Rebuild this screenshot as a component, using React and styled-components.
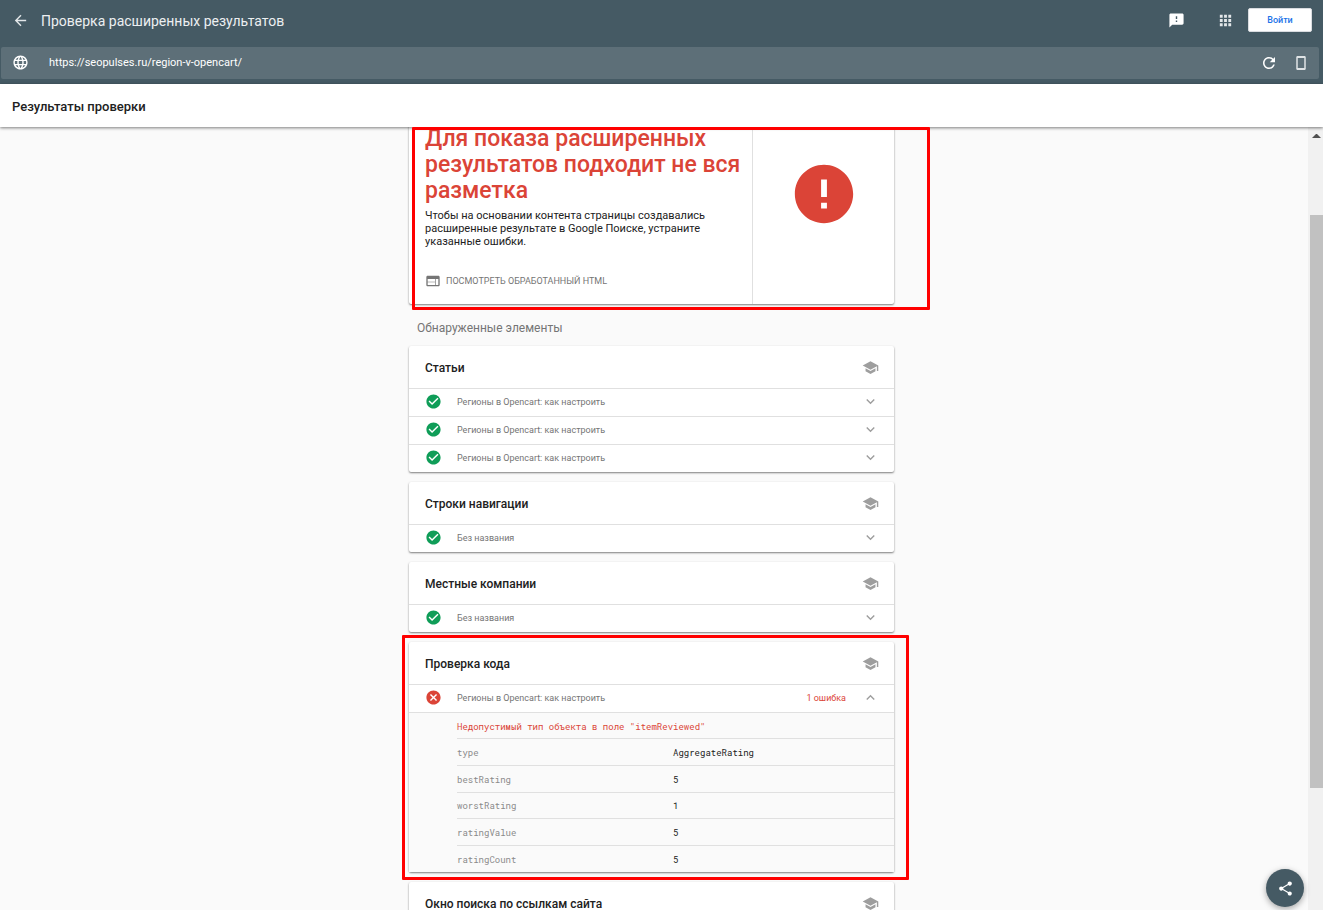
import { useState } from "react";
import styled, { createGlobalStyle } from "styled-components";
import {
  MdApps,
  MdArrowBack,
  MdCancel,
  MdCheckCircle,
  MdError,
  MdExpandLess,
  MdExpandMore,
  MdFeedback,
  MdLanguage,
  MdRefresh,
  MdSchool,
  MdShare,
  MdWeb,
} from "react-icons/md";

const GlobalStyle = createGlobalStyle`
  * {
    box-sizing: border-box;
  }
  body {
    margin: 0;
    font-family: Roboto, "Liberation Sans", sans-serif;
    color: #212121;
    background: #fafafa;
  }
  h1, h2, h3, p {
    margin: 0;
  }
  button, input {
    font-family: inherit;
  }
  svg {
    display: block;
    flex: none;
  }
`;

const Page = styled.div`
  position: relative;
  display: flex;
  flex-direction: column;
  height: 100vh;
  overflow: hidden;
`;

const Header = styled.header`
  flex: none;
  padding: 0 4px 5px 1px;
  background: #455a64;
`;

const TitleBar = styled.div`
  display: flex;
  align-items: center;
  height: 47px;
  padding: 0 7px 7px 11px;
`;

const Title = styled.h1`
  flex: 1;
  padding: 2px 0 0 12px;
  font-size: 14px;
  font-weight: 400;
  line-height: 20px;
  color: #eceff1;
`;

const IconButton = styled.button`
  display: flex;
  padding: 0;
  border: 0;
  background: none;
  color: ${(props) => props.$color || "#fff"};
  cursor: pointer;
`;

const Actions = styled.div`
  display: flex;
  align-items: center;
  gap: ${(props) => props.$gap};
`;

const SignIn = styled.button`
  width: 64px;
  height: 24px;
  margin-left: -18px;
  padding: 0;
  border: 1px solid #dadce0;
  border-radius: 2px;
  background: #fff;
  color: #1a73e8;
  font-size: 9px;
  font-weight: 500;
  cursor: pointer;
`;

const UrlBar = styled.form`
  display: flex;
  align-items: center;
  height: 32px;
  padding: 0 13px 1px 11px;
  border-radius: 2px;
  background: #5d6f78;
  color: #fff;
`;

const UrlInput = styled.input`
  flex: 1;
  min-width: 0;
  margin-left: 20px;
  padding: 0;
  border: 0;
  outline: 0;
  background: none;
  color: #fff;
  font-size: 11px;
  line-height: 16px;
`;

const ResultsBar = styled.div`
  position: relative;
  z-index: 1;
  flex: none;
  height: 43px;
  padding: 0 12px;
  background: #fff;
  box-shadow: 0 1px 3px rgba(0, 0, 0, 0.5);
  font-size: 13px;
  font-weight: 500;
  line-height: 45px;
`;

const Body = styled.div`
  display: flex;
  flex: 1;
  min-height: 0;
`;

const Content = styled.main`
  flex: 1;
  min-width: 0;
  padding-right: 5px;
  overflow: hidden;
`;

const Column = styled.div`
  max-width: 485px;
  margin: -16px auto 0;
`;

const Scrollbar = styled.div`
  flex: none;
  width: 15px;
  padding: 5px 0 0 2px;
  background: #f1f1f1;
  color: #505050;
`;

const Thumb = styled.div`
  height: 573px;
  margin-top: 75px;
  background: #c1c1c1;
`;

const CardBox = styled.section`
  position: relative;
  margin-bottom: 10px;
  border-radius: 2px;
  background: #fff;
  box-shadow: 0 1px 2px rgba(0, 0, 0, 0.5);
`;

const Summary = styled(CardBox)`
  display: flex;
  min-height: 193px;
`;

const SummaryText = styled.div`
  flex: 1;
  padding: 15px 4px 0 16px;
`;

const SummaryTitle = styled.h2`
  font-size: 23px;
  font-weight: 500;
  line-height: 26px;
  color: #db4437;
`;

const SummaryNote = styled.p`
  padding: 5px 38px 0 0;
  font-size: 11px;
  line-height: 13px;
`;

const HtmlButton = styled.button`
  display: flex;
  align-items: center;
  gap: 5px;
  margin-top: 24px;
  padding: 0;
  border: 0;
  background: none;
  color: #757575;
  font-size: 9px;
  line-height: 18px;
  text-transform: uppercase;
  cursor: pointer;
`;

const SummaryStatus = styled.div`
  flex: none;
  width: 142px;
  padding: 48px 0 0 36px;
  border-left: 1px solid #e0e0e0;
  color: #db4437;
`;

const Found = styled.p`
  padding: 4px 8px 8px;
  font-size: 12px;
  line-height: 20px;
  color: #757575;
`;

const CardHeader = styled.div`
  display: flex;
  align-items: center;
  justify-content: space-between;
  height: 42px;
  padding: 1px 15px 0 16px;
`;

const CardTitle = styled.h3`
  font-size: 12px;
  font-weight: 500;
  line-height: 16px;
`;

const HelpLink = styled.a`
  color: #9e9e9e;
`;

const Row = styled.button`
  display: flex;
  align-items: center;
  width: 100%;
  height: 28px;
  padding: 0 15px 2px 16px;
  border: 0;
  border-top: 1px solid #e0e0e0;
  background: none;
  color: #757575;
  font-size: 9px;
  text-align: left;
  cursor: pointer;
`;

const RowName = styled.span`
  flex: 1;
  padding-left: 15px;
`;

const RowErrors = styled.span`
  margin-right: 16px;
  color: #db4437;
`;

const StatusIcon = styled.span`
  color: ${(props) => (props.$ok ? "#0f9d58" : "#db4437")};
`;

const Chevron = styled.span`
  color: #9e9e9e;
`;

const Details = styled.div`
  padding-left: 48px;
  border-top: 1px solid #e0e0e0;
  background: #fafafa;
`;

const Fields = styled.table`
  width: 100%;
  height: 159px;
  border-spacing: 0;
  font-family: "Roboto Mono", "Liberation Mono", monospace;
  font-size: 9px;
  line-height: 12px;

  th,
  td {
    padding: 2px 0 0;
    font-weight: 400;
    text-align: left;
  }
  tr + tr > * {
    border-top: 1px solid #e0e0e0;
  }
`;

const FieldName = styled.th`
  width: 216px;
  color: #8a8a8a;
`;

const FieldError = styled.th`
  color: #db4437;
`;

const Highlight = styled.div`
  position: absolute;
  z-index: 2;
  inset: ${(props) => props.$inset};
  border: 3px solid #f00;
  border-radius: 1px;
  pointer-events: none;
`;

const ShareButton = styled.button`
  position: absolute;
  right: 19px;
  bottom: 3px;
  z-index: 3;
  display: flex;
  align-items: center;
  justify-content: center;
  width: 38px;
  height: 38px;
  padding: 0;
  border: 0;
  border-radius: 50%;
  background: #455a64;
  box-shadow: 0 2px 6px rgba(0, 0, 0, 0.35);
  color: #fff;
  cursor: pointer;
`;

const page = "Регионы в Opencart: как настроить";

const groups = [
  { title: "Статьи", items: [{ name: page }, { name: page }, { name: page }] },
  { title: "Строки навигации", items: [{ name: "Без названия" }] },
  { title: "Местные компании", items: [{ name: "Без названия" }] },
  {
    title: "Проверка кода",
    highlight: true,
    items: [
      {
        name: page,
        errors: "1 ошибка",
        message: 'Недопустимый тип объекта в поле "itemReviewed"',
        fields: [
          ["type", "AggregateRating"],
          ["bestRating", "5"],
          ["worstRating", "1"],
          ["ratingValue", "5"],
          ["ratingCount", "5"],
        ],
      },
    ],
  },
  { title: "Окно поиска по ссылкам сайта", items: [] },
];

const PhoneIcon = () => (
  <svg width="10" height="14" viewBox="0 0 10 14" fill="none">
    <path
      d="M1 1h8v12H1z"
      stroke="#dfe3e5"
      strokeWidth="1.5"
      strokeLinejoin="round"
    />
    <path d="M1 1h8M1 13h8" stroke="#dfe3e5" strokeWidth="2" />
  </svg>
);

const Item = ({ item }) => {
  const [open, setOpen] = useState(Boolean(item.fields));

  return (
    <>
      <Row type="button" aria-expanded={open} onClick={() => setOpen(!open)}>
        <StatusIcon $ok={!item.errors}>
          {item.errors ? <MdCancel size={17} /> : <MdCheckCircle size={17} />}
        </StatusIcon>
        <RowName>{item.name}</RowName>
        {item.errors && <RowErrors>{item.errors}</RowErrors>}
        <Chevron>
          {open ? <MdExpandLess size={17} /> : <MdExpandMore size={17} />}
        </Chevron>
      </Row>
      {open && item.fields && (
        <Details>
          <Fields>
            <tbody>
              <tr>
                <FieldError colSpan={2}>{item.message}</FieldError>
              </tr>
              {item.fields.map(([name, value]) => (
                <tr key={name}>
                  <FieldName scope="row">{name}</FieldName>
                  <td>{value}</td>
                </tr>
              ))}
            </tbody>
          </Fields>
        </Details>
      )}
    </>
  );
};

const App = () => {
  const [url, setUrl] = useState("https://seopulses.ru/region-v-opencart/");

  return (
    <Page>
      <GlobalStyle />
      <Header>
        <TitleBar>
          <IconButton aria-label="Назад" $color="#e3e7e9">
            <MdArrowBack size={17} />
          </IconButton>
          <Title>Проверка расширенных результатов</Title>
          <Actions $gap="32px">
            <IconButton aria-label="Отзыв">
              <MdFeedback size={17} />
            </IconButton>
            <IconButton aria-label="Приложения" $color="#e3e7e9">
              <MdApps size={17} />
            </IconButton>
            <SignIn>Войти</SignIn>
          </Actions>
        </TitleBar>
        <UrlBar onSubmit={(e) => e.preventDefault()}>
          <MdLanguage size={17} />
          <UrlInput
            aria-label="URL"
            value={url}
            onChange={(e) => setUrl(e.target.value)}
          />
          <Actions $gap="18px">
            <IconButton type="button" aria-label="Обновить">
              <MdRefresh size={18} />
            </IconButton>
            <IconButton type="button" aria-label="Устройство">
              <PhoneIcon />
            </IconButton>
          </Actions>
        </UrlBar>
      </Header>
      <ResultsBar>Результаты проверки</ResultsBar>
      <Body>
        <Content>
          <Column>
            <Summary>
              <SummaryText>
                <SummaryTitle>
                  Для показа расширенных результатов подходит не вся разметка
                </SummaryTitle>
                <SummaryNote>
                  Чтобы на основании контента страницы создавались расширенные
                  результате в Google Поиске, устраните указанные ошибки.
                </SummaryNote>
                <HtmlButton>
                  <MdWeb size={16} />
                  Посмотреть обработанный HTML
                </HtmlButton>
              </SummaryText>
              <SummaryStatus>
                <MdError size={70} />
              </SummaryStatus>
              <Highlight $inset="16px -36px -6px 3px" />
            </Summary>
            <Found>Обнаруженные элементы</Found>
            {groups.map((group) => (
              <CardBox key={group.title}>
                <CardHeader>
                  <CardTitle>{group.title}</CardTitle>
                  <HelpLink href="#" aria-label="Справка">
                    <MdSchool size={17} />
                  </HelpLink>
                </CardHeader>
                {group.items.map((item, i) => (
                  <Item key={i} item={item} />
                ))}
                {group.highlight && <Highlight $inset="-7px -15px -8px -7px" />}
              </CardBox>
            ))}
          </Column>
        </Content>
        <Scrollbar>
          <svg width="13" height="8" viewBox="0 0 13 8">
            <path d="M2 6 6 2h1l4 4z" fill="currentColor" />
          </svg>
          <Thumb />
        </Scrollbar>
      </Body>
      <ShareButton aria-label="Поделиться">
        <MdShare size={17} />
      </ShareButton>
    </Page>
  );
};

export default App;
